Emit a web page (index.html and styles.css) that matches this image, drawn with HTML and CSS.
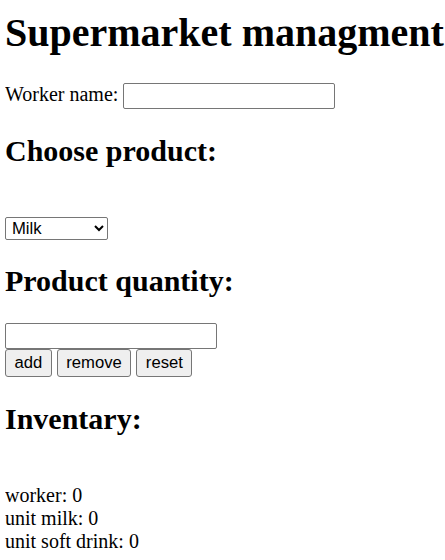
FILE: index.html
```html
<!DOCTYPE html>
<html>
<head>
<meta charset="utf-8">
<link rel="stylesheet" href="styles.css">
</head>
<body>
<h1 class="title">Supermarket managment</h1>
<label class="worker">Worker name: <input type="text" class="text-input"></label>
<h2>Choose product:</h2>
<br>
<select class="product">
<option>Milk</option>
<option>Soft drink</option>
</select>
<h2>Product quantity:</h2>
<input type="text" class="text-input"><br>
<button class="btn">add</button>
<button class="btn">remove</button>
<button class="btn">reset</button>
<h2>Inventary:</h2>
<br>
<div class="inventory">
<div>worker: 0</div>
<div>unit milk: 0</div>
<div>unit soft drink: 0</div>
</div>
</body>
</html>
```

FILE: styles.css
```css
html, body {
  overflow: hidden;
}
body {
  margin: 0 0 0 5px;
  font-family: "Liberation Serif", "Times New Roman", serif;
  font-size: 20px;
  color: #000;
  background: #fff;
}
.title {
  white-space: nowrap;
  font-size: 40px;
  margin: 9px 0 26.8px;
}
h2 {
  font-size: 30px;
  margin: 24.9px 0;
}
.text-input {
  box-sizing: border-box;
  width: 212px;
  height: 26px;
  padding: 1px 3px;
  border: 1px solid #767676;
  border-radius: 2px;
  font-family: "Liberation Sans", Arial, sans-serif;
  font-size: 16.67px;
  background: #fff;
  margin: 0;
}
.product {
  box-sizing: border-box;
  width: 103px;
  height: 23px;
  padding-left: 2px;
  border: 1px solid #767676;
  border-radius: 2px;
  font-family: "Liberation Sans", Arial, sans-serif;
  font-size: 16.67px;
  color: #000;
  background: #fff;
  margin: 0;
}
.btn {
  box-sizing: border-box;
  height: 28px;
  padding: 1px 8.5px;
  border: 1px solid #767676;
  border-radius: 3px;
  background: #efefef;
  font-family: "Liberation Sans", Arial, sans-serif;
  font-size: 16.67px;
  color: #000;
  margin: 0;
}
```
